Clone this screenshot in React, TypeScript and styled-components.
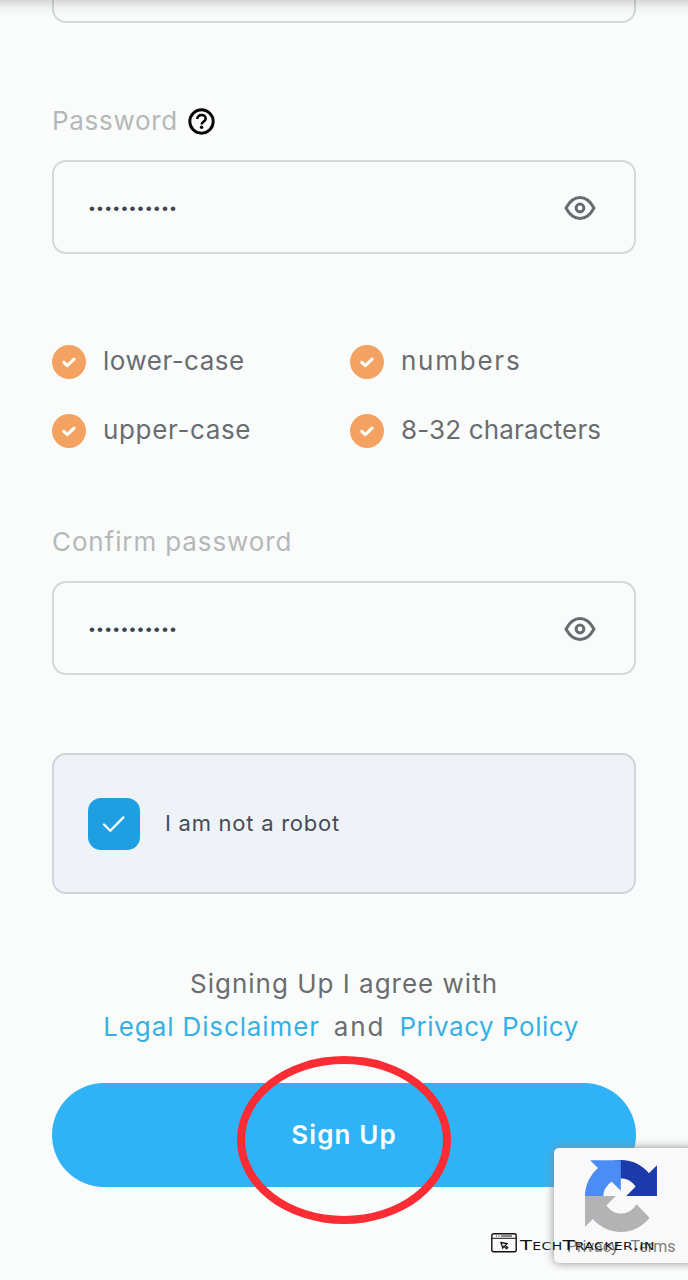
import React from "react";
import styled, { createGlobalStyle } from "styled-components";

const GlobalStyle = createGlobalStyle`
  *, *::before, *::after { box-sizing: border-box; }
  body { margin: 0; background: #fafcfb; }
`;

const Page = styled.main`
  position: relative;
  width: 688px;
  height: 1280px;
  overflow: hidden;
  padding: 0 52px;
  background: #fafcfb;
  font-family: Inter, "Liberation Sans", sans-serif;
  font-size: 26px;
  color: #696d70;
`;

const HeaderShadow = styled.div`
  position: absolute;
  inset: 0 0 auto;
  height: 16px;
  background: linear-gradient(rgba(0, 0, 0, 0.15), rgba(0, 0, 0, 0.05) 45%, rgba(0, 0, 0, 0));
`;

const Text = styled.span<{ $spacing?: number }>`
  padding-bottom: 2px;
  letter-spacing: ${({ $spacing = 0 }) => $spacing}px;
  white-space: nowrap;
`;

const Field = styled.div`
  display: flex;
  align-items: center;
  justify-content: space-between;
  height: 94px;
  padding: 1px 38px 0 35px;
  border: 2px solid #d5d8d8;
  border-radius: 14px;
`;

const PreviousField = styled(Field)`
  height: 43px;
  margin-top: -20px;
`;

const Label = styled.label<{ $top: number }>`
  display: flex;
  align-items: center;
  gap: 10px;
  height: 40px;
  margin-top: ${({ $top }) => $top}px;
  margin-bottom: 19px;
  color: #b5b8b8;
`;

const Dots = styled.span`
  padding-top: 3px;
  font-family: "Liberation Sans", sans-serif;
  font-size: 17px;
  line-height: 20px;
  letter-spacing: 2.15px;
  color: #3f444e;
`;

const Rules = styled.ul`
  display: grid;
  grid-template-columns: 298px 1fr;
  grid-auto-rows: 69px;
  align-items: center;
  margin: 73px 0 0;
  padding: 0;
  list-style: none;
`;

const Rule = styled.li`
  display: flex;
  align-items: center;
  gap: 17px;
`;

const Badge = styled.span`
  display: flex;
  width: 34px;
  height: 34px;
  border-radius: 50%;
  background: #f4a261;
`;

const RobotBox = styled.div`
  display: flex;
  align-items: center;
  gap: 25px;
  height: 141px;
  margin-top: 78px;
  padding-left: 34px;
  border: 2px solid #d0d5d9;
  border-radius: 14px;
  background: #eff2f6;
  font-size: 22px;
  color: #474b55;
`;

const Checkbox = styled.span`
  display: flex;
  width: 52px;
  height: 52px;
  border-radius: 13px;
  background: #1e9fe1;
`;

const Terms = styled.div`
  display: flex;
  flex-direction: column;
  align-items: center;
  margin-top: 68px;
  line-height: 43px;
`;

const TermsLine = styled.div`
  display: flex;
  gap: 14px;
  height: 43px;
  margin-right: 6px;

  &:first-child { margin-right: 0; }
`;

const Link = styled(Text).attrs({ as: "a" })`
  color: #34b1e4;
`;

const SubmitButton = styled.button`
  display: block;
  width: 100%;
  height: 104px;
  margin-top: 35px;
  padding: 0 0 2px;
  border: 0;
  border-radius: 52px;
  background: #30b3f6;
  color: #fbfeff;
  font: 600 26px Inter, "Liberation Sans", sans-serif;
`;

const Highlight = styled.div`
  position: absolute;
  left: 237px;
  top: 1056px;
  width: 214px;
  height: 168px;
  border: 8px solid #fb2c33;
  border-radius: 50%;
`;

const CaptchaBadge = styled.aside`
  position: absolute;
  right: -10px;
  top: 1148px;
  display: flex;
  flex-direction: column;
  align-items: flex-start;
  width: 144px;
  height: 115px;
  padding: 12px 0 0 13px;
  border-radius: 5px;
  background: #f9f9f9;
  box-shadow: 0 0 10px #8a8a8a;
  font: 16px/20px Roboto, sans-serif;
  color: #7d7d7d;

  svg { margin: 0 0 5px 18px; }
`;

const Watermark = styled.div`
  position: absolute;
  left: 491px;
  top: 1232px;
  display: flex;
  align-items: center;
  gap: 3px;
  height: 22px;
  color: #111;
`;

const WatermarkName = styled.span`
  padding-top: 3px;
  font: 14px/20px "DejaVu Sans", sans-serif;
  font-variant: small-caps;
  letter-spacing: 0.25px;
  transform: scaleX(1.4);
  transform-origin: left;
`;

const HelpIcon = () => (
  <svg width="27" height="27" viewBox="0 0 27 27" fill="none" stroke="#060606" strokeWidth="2.900">
    <circle cx="13.500" cy="13.500" r="11.700" />
    <path d="M9.300 10.900c0-2.300 1.800-3.900 4.200-3.900s4.200 1.500 4.200 3.700c0 2.600-4 2.900-4 5.700" strokeWidth="2.600" />
    <circle cx="13.600" cy="19.300" r="1.700" fill="#060606" stroke="none" />
  </svg>
);

const EyeIcon = () => (
  <svg width="32" height="26" viewBox="0 0 32 26" fill="none" stroke="#686c70" strokeWidth="3">
    <path d="M2 13C5.500 6.500 10.300 2.500 16 2.500S26.500 6.500 30 13C26.500 19.500 21.700 23.500 16 23.500S5.500 19.500 2 13Z" strokeLinejoin="round" />
    <circle cx="16" cy="13" r="3.900" />
  </svg>
);

const RuleCheck = () => (
  <svg width="34" height="34" viewBox="0 0 34 34" fill="none" stroke="#fffdf8" strokeWidth="3.200" strokeLinecap="round" strokeLinejoin="round">
    <path d="M11.800 17.300l3.500 3.300 6.800-6.500" />
  </svg>
);

const BoxCheck = () => (
  <svg width="52" height="52" viewBox="0 0 52 52" fill="none" stroke="#fff" strokeWidth="2.300" strokeLinecap="round" strokeLinejoin="round">
    <path d="M16 26.500l6.300 6.300L35.400 19.400" />
  </svg>
);

const RecaptchaLogo = () => (
  <svg width="72" height="72" viewBox="0 0 64 64">
    <path fill="#1c3aa9" d="M64 31.955l-.033-1.370V4.687l-7.160 7.160C50.948 4.674 42.033.093 32.050.093c-10.400 0-19.622 4.960-25.458 12.640l11.736 11.860a15.550 15.550 0 0 1 4.754-5.334c2.050-1.600 4.952-2.906 8.968-2.906.485 0 .860.057 1.135.163 4.976.393 9.288 3.140 11.828 7.124l-8.307 8.307L64 31.953" />
    <path fill="#4c8cf5" d="M31.862.094l-1.370.033H4.594l7.160 7.160C4.580 13.147 0 22.060 0 32.046c0 10.400 4.960 19.622 12.640 25.458L24.500 45.768a15.550 15.550 0 0 1-5.334-4.754c-1.600-2.050-2.906-4.952-2.906-8.968 0-.485.057-.860.163-1.135.393-4.976 3.140-9.288 7.124-11.828l8.307 8.307L31.860.095" />
    <path fill="#b3b3b3" d="M.001 32.045l.033 1.370v25.898l7.160-7.160c5.860 7.173 14.774 11.754 24.760 11.754 10.400 0 19.622-4.960 25.458-12.640l-11.736-11.860a15.550 15.550 0 0 1-4.754 5.334c-2.050 1.600-4.952 2.906-8.968 2.906-.485 0-.860-.057-1.135-.163-4.976-.393-9.288-3.140-11.828-7.124l8.307-8.307c-10.522.040-22.400.066-27.295-.005" />
  </svg>
);

const BrowserIcon = () => (
  <svg width="26" height="20" viewBox="0 0 26 20" fill="none" stroke="#111" strokeWidth="1.400">
    <rect x=".8" y=".8" width="24.400" height="18" rx="1.800" />
    <path d="M1 5.300h24" strokeWidth="1" />
    <path d="M5 3h1M7.500 3h1M10 3h11" strokeWidth="1" />
    <path d="M10 9.500l6 1.200-1.800 1.500 2.600 2.400-1.300 1-2.500-2.400-1.200 1.900z" strokeWidth="1.300" />
  </svg>
);

const rules = [
  { name: "lower-case", spacing: 0.5 },
  { name: "numbers", spacing: 1.75 },
  { name: "upper-case", spacing: 0.65 },
  { name: "8-32 characters", spacing: 0.15 },
];

export default function App() {
  return (
    <Page>
      <GlobalStyle />
      <PreviousField />
      <HeaderShadow />

      <Label $top={78}>
        <Text $spacing={0.7}>Password</Text>
        <HelpIcon />
      </Label>
      <Field>
        <Dots>•••••••••••</Dots>
        <EyeIcon />
      </Field>

      <Rules>
        {rules.map((rule) => (
          <Rule key={rule.name}>
            <Badge><RuleCheck /></Badge>
            <Text $spacing={rule.spacing}>{rule.name}</Text>
          </Rule>
        ))}
      </Rules>

      <Label $top={57}>
        <Text $spacing={0.89}>Confirm password</Text>
      </Label>
      <Field>
        <Dots>•••••••••••</Dots>
        <EyeIcon />
      </Field>

      <RobotBox>
        <Checkbox><BoxCheck /></Checkbox>
        <Text $spacing={0.74}>I am not a robot</Text>
      </RobotBox>

      <Terms>
        <TermsLine><Text $spacing={1}>Signing Up I agree with</Text></TermsLine>
        <TermsLine>
          <Link $spacing={0.88}>Legal Disclaimer</Link>
          <Text $spacing={1.9}>and</Text>
          <Link $spacing={0.52}>Privacy Policy</Link>
        </TermsLine>
      </Terms>

      <SubmitButton><Text $spacing={1.1}>Sign Up</Text></SubmitButton>
      <Highlight />

      <CaptchaBadge>
        <RecaptchaLogo />
        <span>Privacy · Terms</span>
      </CaptchaBadge>
      <Watermark>
        <BrowserIcon />
        <WatermarkName>TechTracker.in</WatermarkName>
      </Watermark>
    </Page>
  );
}
